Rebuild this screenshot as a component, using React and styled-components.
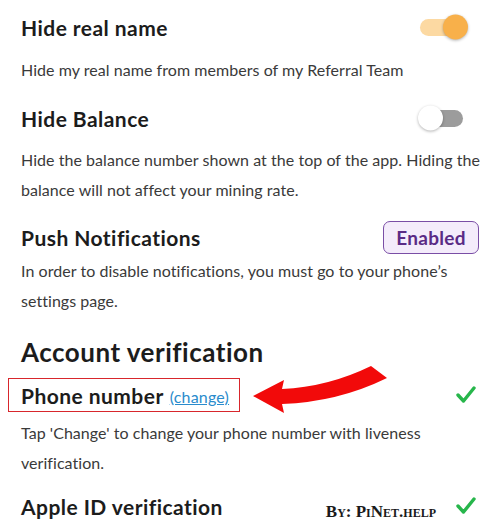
import React from "react";
import styled, { createGlobalStyle } from "styled-components";

const Global = createGlobalStyle`
  html, body { margin: 0; padding: 0; background: #ffffff; }
  body { font-family: "Lato", "Noto Sans", sans-serif; }
`;

const Page = styled.div`
  position: relative;
  width: 500px;
  height: 528px;
  overflow: hidden;
  box-sizing: border-box;
  padding: 7px 21px 0 21px;
  background: #fff;
`;

const Row = styled.div`
  display: flex;
  align-items: center;
  justify-content: space-between;
  height: ${(p) => p.$h || 40}px;
  margin-top: ${(p) => p.$mt || 0}px;
`;

const Title = styled.div`
  font-size: 21px;
  font-weight: 700;
  color: #1c1c1c;
  letter-spacing: 0.45px;
  white-space: nowrap;
`;

const Desc = styled.p`
  margin: ${(p) => p.$mt || 0}px 0 0 0;
  font-size: 16px;
  line-height: 30px;
  color: #3a3a3a;
  letter-spacing: 0.05px;
  white-space: nowrap;
`;

const Heading = styled.h2`
  margin: ${(p) => p.$mt || 0}px 0 0 0;
  font-size: 26px;
  line-height: 36px;
  font-weight: 700;
  color: #1c1c1c;
  letter-spacing: 0.5px;
`;

const Track = styled.div`
  position: relative;
  width: 42px;
  height: 17px;
  border-radius: 9px;
  margin-right: ${(p) => p.$mr || 0}px;
  background: ${(p) => (p.$on ? "#fcd9a2" : "#9c9c9c")};
`;

const Knob = styled.div`
  position: absolute;
  top: 50%;
  width: 25px;
  height: 25px;
  border-radius: 50%;
  transform: translateY(-50%);
  ${(p) => (p.$on ? "right: -6px;" : "left: -3px;")}
  background: ${(p) => (p.$on ? "#f8b04a" : "#ffffff")};
  box-shadow: 0 1px 3px rgba(0, 0, 0, 0.3);
`;

const Toggle = ({ on, mr }) => (
  <Track $on={on} $mr={mr}>
    <Knob $on={on} />
  </Track>
);

const Badge = styled.div`
  box-sizing: border-box;
  width: 96px;
  height: 33px;
  border: 1.5px solid #7a4ea6;
  border-radius: 7px;
  background: #f4ecfb;
  color: #5a2b86;
  font-size: 19px;
  font-weight: 700;
  letter-spacing: 0.3px;
  display: flex;
  align-items: center;
  justify-content: center;
`;

const Boxed = styled.div`
  display: flex;
  align-items: center;
  gap: 6px;
  box-sizing: border-box;
  height: 34px;
  margin-left: -13px;
  padding: 0 10px 0 12px;
  border: 1.5px solid #d8262c;
`;

const Change = styled.a`
  font-size: 16px;
  color: #2a8bcc;
  text-decoration: underline;
  margin-top: 2px;
  letter-spacing: 0.2px;
`;

const Right = styled.div`
  display: flex;
  align-items: center;
  gap: 20px;
`;

const Watermark = styled.span`
  font-family: "Liberation Serif", "DejaVu Serif", serif;
  font-weight: 700;
  font-size: 17px;
  font-variant: small-caps;
  color: #1a1a1a;
  margin-top: 12px;
`;

const CheckSvg = styled.svg`
  display: block;
  margin-right: 3px;
`;

const Check = () => (
  <CheckSvg width="20" height="18" viewBox="0 0 20 18">
    <polyline
      points="2,9 7.5,15 18,2"
      fill="none"
      stroke="#27b64b"
      strokeWidth="3.4"
      strokeLinecap="round"
      strokeLinejoin="round"
    />
  </CheckSvg>
);

const ArrowLayer = styled.svg`
  position: absolute;
  left: 0;
  top: 0;
  pointer-events: none;
`;

export default function App() {
  return (
    <>
      <Global />
      <Page>
        <Row>
          <Title>Hide real name</Title>
          <Toggle on mr={17} />
        </Row>
        <Desc $mt={8}>Hide my real name from members of my Referral Team</Desc>

        <Row $mt={13}>
          <Title>Hide Balance</Title>
          <Toggle mr={16} />
        </Row>
        <Desc $mt={7}>
          Hide the balance number shown at the top of the app. Hiding the
          <br />
          balance will not affect your mining rate.
        </Desc>

        <Row $h={36} $mt={14}>
          <Title>Push Notifications</Title>
          <Badge>Enabled</Badge>
        </Row>
        <Desc $mt={1}>
          In order to disable notifications, you must go to your phone’s
          <br />
          settings page.
        </Desc>

        <Heading $mt={18}>Account verification</Heading>

        <Row $h={36} $mt={7}>
          <Boxed>
            <Title>Phone number</Title>
            <Change>(change)</Change>
          </Boxed>
          <Check />
        </Row>
        <Desc $mt={5}>
          Tap 'Change' to change your phone number with liveness
          <br />
          verification.
        </Desc>

        <Row $h={36} $mt={10}>
          <Title>Apple ID verification</Title>
          <Right>
            <Watermark>By: PiNet.help</Watermark>
            <Check />
          </Right>
        </Row>

        <ArrowLayer width="500" height="528" viewBox="0 0 500 528">
          <path
            d="M253 396 L284 380 L282 389 Q328 387 371 366 L387 378 Q338 402 282 404 L284 413 Z"
            fill="#f20a0a"
          />
        </ArrowLayer>
      </Page>
    </>
  );
}
